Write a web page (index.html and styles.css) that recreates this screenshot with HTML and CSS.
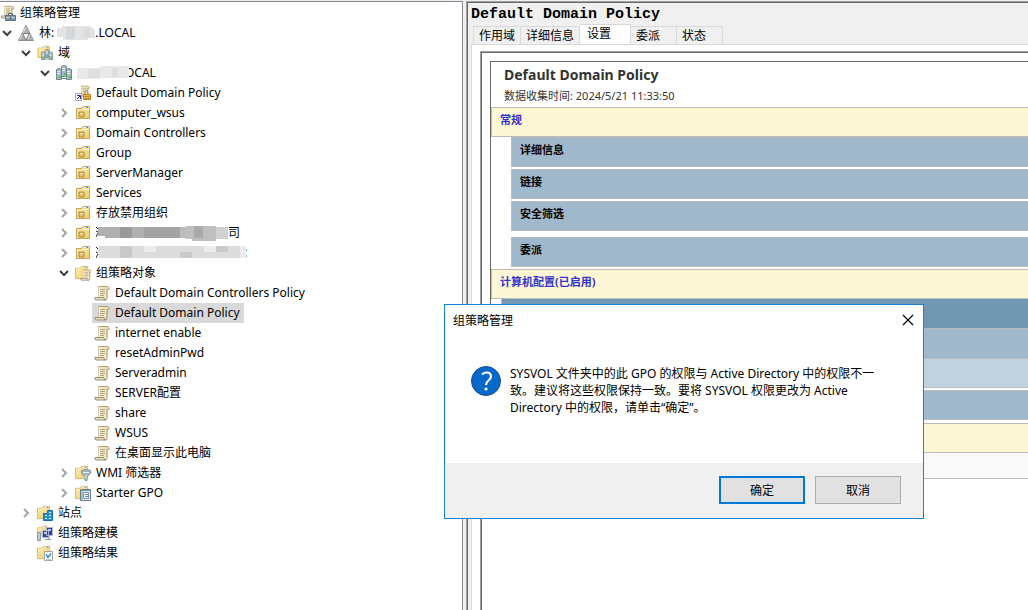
FILE: index.html
```html
<!DOCTYPE html>
<html lang="zh-CN">
  <head>
    <meta charset="UTF-8" />
    <meta name="viewport" content="width=device-width, initial-scale=1.0" />
    <title>组策略管理</title>
    <link rel="stylesheet" href="styles.css">
  </head>
  <body>
    <!-- 图标定义 -->
    <svg class="sprite" aria-hidden="true">
      <linearGradient id="paper" x1="0" x2="1"><stop offset="0" stop-color="#fffbe8" /><stop offset="1" stop-color="#fde6a6" /></linearGradient>
      <linearGradient id="gold" x1="0" y1="0" x2="1" y2="1"><stop offset="0" stop-color="#ffedad" /><stop offset="1" stop-color="#f0cb6c" /></linearGradient>
      <symbol id="i-down" viewBox="0 0 10 10"><path d="M1 3l4 4 4-4" fill="none" stroke="#404040" stroke-width="2" /></symbol>
      <symbol id="i-right" viewBox="0 0 10 10"><path d="M3 1l4 4-4 4" fill="none" stroke="#a6a6a6" stroke-width="2" /></symbol>
      <symbol id="i-scroll" viewBox="0 0 16 16">
        <path d="M4 1h9v11h-2v3H1v-3h3z" fill="url(#paper)" />
        <path d="M4 1.5h10q1 0 1 3h-2" fill="#efe0b0" stroke="#a8a08a" />
        <path d="M4.500 1.500V12" fill="none" stroke="#d2c9ab" />
        <path d="M13 4v9q0 2-2 2" fill="none" stroke="#99917c" />
        <path d="M1 12.500h9q0 2.500 2 2.500H2Q.5 15 1 12.500" fill="#ece2bd" stroke="#938d7c" />
        <path d="M6 4.500h5M6 6.500h5M6 8.500h5M6 10.500h4" stroke="#a3a29a" />
      </symbol>
      <symbol id="i-folder" viewBox="0 0 16 16">
        <path d="M.5 3.500h5l1.500-2h6.500v13H.5z" fill="url(#gold)" stroke="#dab664" />
        <path d="M8 2.500h4" stroke="#fff" /><path d="M10 2.500h2" stroke="#4d9ce8" />
        <path d="M1.500 4.500h5" stroke="#fff5ca" />
      </symbol>
      <symbol id="i-ou" viewBox="0 0 16 16">
        <path d="M1.500 3.500h5l1.500-2h6.500v12h-13z" fill="url(#gold)" stroke="#c9a456" />
        <path d="M9 2.500h5" stroke="#fff" /><path d="M11 2.500h2" stroke="#4d8fdf" />
        <path d="M8 4.500h6" stroke="#fff5ca" />
        <path d="M4 7h5v5H4z" fill="#dcbd66" stroke="#a88c42" /><path d="M5 8.500h3l-2 2" fill="none" stroke="#f7e3a0" />
      </symbol>
      <symbol id="i-forest" viewBox="0 0 16 16">
        <path d="M8 .5L15.500 15.500H.5z" fill="#b7b9bb" stroke="#8d9092" />
        <path d="M8 2L4.500 8.500h7zM4 9l-3 6h6zM12 9l-3 6h6z" fill="#acaeb0" />
        <path d="M4.500 8.500h7L8 15z" fill="#fff" stroke="#7b7e80" />
        <path d="M7.500 3L5 8M4 10l-2 4M12 10l-2 4" stroke="#e7e8e8" />
      </symbol>
      <symbol id="i-server" viewBox="0 0 6 12">
        <path d="M.5 1.500L3 .5l2.500 1v10h-5z" fill="#a6bac6" stroke="#728691" />
        <path d="M1 3.500h3M1 5.500h3" stroke="#eaf1f4" /><path d="M3 8h2v2H3z" fill="#35d22c" />
      </symbol>
      <symbol id="i-servers" viewBox="0 0 16 16">
        <use href="#i-server" x="5" y="0" width="6" height="12" />
        <use href="#i-server" x="0" y="3" width="6" height="12" />
        <use href="#i-server" x="10" y="3" width="6" height="12" />
        <path d="M6 13.500h4" stroke="#718692" />
      </symbol>
      <symbol id="i-domains" viewBox="0 0 16 16">
        <use href="#i-folder" width="15" height="14" />
        <use href="#i-servers" x="4" y="4" width="12" height="12" />
      </symbol>
      <symbol id="i-root" viewBox="0 0 16 16">
        <use href="#i-scroll" width="15" height="14" />
        <path d="M5.500 10.500h10v5h-10z" fill="#829bab" stroke="#5a7181" />
        <path d="M8.500 10.500v-2h4v2" fill="none" stroke="#5c6b74" /><path d="M6 12.500h9" stroke="#bfd0da" /><path d="M10 12h1v2h-1z" fill="#394b56" />
      </symbol>
      <symbol id="i-link" viewBox="0 0 16 16">
        <use href="#i-scroll" x="2" width="14" height="12" />
        <path d="M.5 8.500h6v7h-6z" fill="#fff" stroke="#a0a9b8" /><path d="M2 14l3-3M2 10.500h3.500V14" fill="none" stroke="#302b91" />
        <path d="M10 10V7.500q0-2 1.500-2t1.500 2V10" fill="none" stroke="#9c8b54" /><path d="M8.500 9.500h7v5h-7z" fill="#e9b644" stroke="#bd8728" /><path d="M9 11.500h6M9 13.500h6" stroke="#c58c28" />
      </symbol>
      <symbol id="i-gpos" viewBox="0 0 16 16">
        <use href="#i-folder" width="15" height="15" />
        <use href="#i-scroll" x="5" y="4" width="12" height="12" />
      </symbol>
      <symbol id="i-wmi" viewBox="0 0 16 16">
        <use href="#i-folder" width="15" height="15" />
        <path d="M6.500 8.500v-3q4-2 9 0v3l-3.500 3v4h-2v-4z" fill="#a3b8c4" stroke="#7e95a3" /><path d="M8 7.500h6M11 10v4" stroke="#edf4f7" />
      </symbol>
      <symbol id="i-starter" viewBox="0 0 16 16">
        <use href="#i-folder" width="15" height="15" />
        <path d="M5.500 4.500h10v11h-10z" fill="#e5edf2" stroke="#667d8b" /><path d="M7 4v12M6 5.500h9" stroke="#6f97ae" /><path d="M8.500 7.500h5v6h-5z" fill="#fff" stroke="#7c8fae" /><path d="M10 9.500h3M10 11.500h3" stroke="#6480a6" />
      </symbol>
      <symbol id="i-sites" viewBox="0 0 16 16">
        <use href="#i-folder" width="15" height="15" />
        <path d="M6.500 8.500h4v-3h5v10h-9z" fill="#278fd7" stroke="#1670b2" /><path d="M8 10.500h2M8 13.500h2M12 7.500h2M12 10.500h2M12 13.500h2" stroke="#d5edff" />
      </symbol>
      <symbol id="i-model" viewBox="0 0 16 16">
        <use href="#i-folder" width="12" height="12" />
        <path d="M.5 7.500h3v8h-3z" fill="#bdc8cf" stroke="#8a989f" /><path d="M5.500 5.500h6v7h-6zM9.500 2.500h6v8h-6z" fill="#2b3fb8" stroke="#b4bbc5" />
        <path d="M7 7h2v2H7zM11 4h3v2h-3z" fill="#b9cbff" /><path d="M8 14.500h6M12 11v4" stroke="#8a989f" />
      </symbol>
      <symbol id="i-result" viewBox="0 0 16 16">
        <use href="#i-folder" width="15" height="15" />
        <path d="M7.500 6.500h8v9h-8z" fill="#fff" stroke="#9aa9b3" /><path d="M9 9.500l2 3 3-4" fill="none" stroke="#3787c5" stroke-width="1.500" /><path d="M9 14.500h5" stroke="#bdc8cf" />
      </symbol>
    </svg>

    <div class="window">
      <nav class="tree">
        <div class="root"><svg class="icon"><use href="#i-root" /></svg><span>组策略管理</span></div>
        <ul>
          <li>
            <div class="row"><svg class="toggle"><use href="#i-down" /></svg><a class="node" href="#"><svg class="icon"><use href="#i-forest" /></svg><span>林: <svg class="mosaic" width="38" height="16" viewBox="0 1 38 16"><path d="M0 3h5V1h28l5 4v8h-7v2H6v-3H0z" fill="#e3e3e4" /><path d="M9 2h9v12H9z" fill="#d5d8db" /><path d="M27 3h6v10h-6z" fill="#dcdcdc" /></svg>.LOCAL</span></a></div>
            <ul>
              <li>
                <div class="row"><svg class="toggle"><use href="#i-down" /></svg><a class="node" href="#"><svg class="icon"><use href="#i-domains" /></svg><span>域</span></a></div>
                <ul>
                  <li>
                    <div class="row"><svg class="toggle"><use href="#i-down" /></svg><a class="node" href="#"><svg class="icon"><use href="#i-servers" /></svg><span><svg class="mosaic lap" width="52" height="16" viewBox="2 1 52 16"><path d="M0 3h25V1h29v12H25v1H0z" fill="#e9e9e9" /><path d="M13 4h12v9H13zM37 3h6v9h-6z" fill="#dfdfdf" /></svg>OCAL</span></a></div>
                    <ul>
                      <li><div class="row"><i class="toggle"></i><a class="node" href="#"><svg class="icon"><use href="#i-link" /></svg><span>Default Domain Policy</span></a></div></li>
                      <li><div class="row"><svg class="toggle"><use href="#i-right" /></svg><a class="node" href="#"><svg class="icon"><use href="#i-ou" /></svg><span>computer_wsus</span></a></div></li>
                      <li><div class="row"><svg class="toggle"><use href="#i-right" /></svg><a class="node" href="#"><svg class="icon"><use href="#i-ou" /></svg><span>Domain Controllers</span></a></div></li>
                      <li><div class="row"><svg class="toggle"><use href="#i-right" /></svg><a class="node" href="#"><svg class="icon"><use href="#i-ou" /></svg><span>Group</span></a></div></li>
                      <li><div class="row"><svg class="toggle"><use href="#i-right" /></svg><a class="node" href="#"><svg class="icon"><use href="#i-ou" /></svg><span>ServerManager</span></a></div></li>
                      <li><div class="row"><svg class="toggle"><use href="#i-right" /></svg><a class="node" href="#"><svg class="icon"><use href="#i-ou" /></svg><span>Services</span></a></div></li>
                      <li><div class="row"><svg class="toggle"><use href="#i-right" /></svg><a class="node" href="#"><svg class="icon"><use href="#i-ou" /></svg><span>存放禁用组织</span></a></div></li>
                      <li><div class="row"><svg class="toggle"><use href="#i-right" /></svg><a class="node" href="#"><svg class="icon"><use href="#i-ou" /></svg><span><svg class="mosaic" width="132" height="18" viewBox="0 2 132 18"><path d="M0 4l2 2M0 8l2 1M0 14l2-4" stroke="#222" /><path d="M2 4h130v11H9v-2H2z" fill="#b0b0b0" /><path d="M24 4h12v11H24z" fill="#9c999b" /><path d="M48 4h36v11H48z" fill="#a4a4a4" /><path d="M84 4h12v11H84z" fill="#b9bdbb" /><path d="M90 3h30v15H96v-2h-6z" fill="#bfbfbf" /><path d="M98 3h9v12h-9z" fill="#aaa" /><path d="M120 4h12v12h-12z" fill="#d0d0d0" /></svg>司</span></a></div></li>
                      <li><div class="row"><svg class="toggle"><use href="#i-right" /></svg><a class="node" href="#"><svg class="icon"><use href="#i-ou" /></svg><span><svg class="mosaic" width="151" height="18" viewBox="0 2 151 18"><path d="M0 4l2 2M0 9l2 1M0 15l2-4" stroke="#222" /><path d="M3 3h147v12H3z" fill="#dcdcdc" /><path d="M24 3h12v12H24zM84 9h12v6H84zM120 3h12v6h-12z" fill="#c9c9c9" /><path d="M48 3h12v6H48zM108 3h12v6h-12zM144 3h6v12h-6z" fill="#ececec" /><path d="M150 6h1v2h-1zM150 12h1v2h-1z" fill="#6dc0ee" /></svg></span></a></div></li>
                      <li>
                        <div class="row"><svg class="toggle"><use href="#i-down" /></svg><a class="node" href="#"><svg class="icon"><use href="#i-gpos" /></svg><span>组策略对象</span></a></div>
                        <ul>
                          <li><div class="row"><i class="toggle"></i><a class="node" href="#"><svg class="icon"><use href="#i-scroll" /></svg><span>Default Domain Controllers Policy</span></a></div></li>
                          <li><div class="row"><i class="toggle"></i><a class="node selected" href="#"><svg class="icon"><use href="#i-scroll" /></svg><span>Default Domain Policy</span></a></div></li>
                          <li><div class="row"><i class="toggle"></i><a class="node" href="#"><svg class="icon"><use href="#i-scroll" /></svg><span>internet enable</span></a></div></li>
                          <li><div class="row"><i class="toggle"></i><a class="node" href="#"><svg class="icon"><use href="#i-scroll" /></svg><span>resetAdminPwd</span></a></div></li>
                          <li><div class="row"><i class="toggle"></i><a class="node" href="#"><svg class="icon"><use href="#i-scroll" /></svg><span>Serveradmin</span></a></div></li>
                          <li><div class="row"><i class="toggle"></i><a class="node" href="#"><svg class="icon"><use href="#i-scroll" /></svg><span>SERVER配置</span></a></div></li>
                          <li><div class="row"><i class="toggle"></i><a class="node" href="#"><svg class="icon"><use href="#i-scroll" /></svg><span>share</span></a></div></li>
                          <li><div class="row"><i class="toggle"></i><a class="node" href="#"><svg class="icon"><use href="#i-scroll" /></svg><span>WSUS</span></a></div></li>
                          <li><div class="row"><i class="toggle"></i><a class="node" href="#"><svg class="icon"><use href="#i-scroll" /></svg><span>在桌面显示此电脑</span></a></div></li>
                        </ul>
                      </li>
                      <li><div class="row"><svg class="toggle"><use href="#i-right" /></svg><a class="node" href="#"><svg class="icon"><use href="#i-wmi" /></svg><span>WMI 筛选器</span></a></div></li>
                      <li><div class="row"><svg class="toggle"><use href="#i-right" /></svg><a class="node" href="#"><svg class="icon"><use href="#i-starter" /></svg><span>Starter GPO</span></a></div></li>
                    </ul>
                  </li>
                </ul>
              </li>
              <li><div class="row"><svg class="toggle"><use href="#i-right" /></svg><a class="node" href="#"><svg class="icon"><use href="#i-sites" /></svg><span>站点</span></a></div></li>
              <li><div class="row"><i class="toggle"></i><a class="node" href="#"><svg class="icon"><use href="#i-model" /></svg><span>组策略建模</span></a></div></li>
              <li><div class="row"><i class="toggle"></i><a class="node" href="#"><svg class="icon"><use href="#i-result" /></svg><span>组策略结果</span></a></div></li>
            </ul>
          </li>
        </ul>
      </nav>

      <main class="detail">
        <h1>Default Domain Policy</h1>
        <div class="tabs">
          <button class="tab">作用域</button>
          <button class="tab">详细信息</button>
          <button class="tab active">设置</button>
          <button class="tab short">委派</button>
          <button class="tab short">状态</button>
        </div>
        <div class="tab-page">
          <div class="frame">
            <div class="report">
              <h2>Default Domain Policy</h2>
              <p class="time">数据收集时间: 2024/5/21 11:33:50</p>
              <h3 class="section">常规</h3>
              <div class="group">
                <div class="bar">详细信息</div>
                <div class="bar">链接</div>
                <div class="bar">安全筛选</div>
                <div class="bar last">委派</div>
              </div>
              <h3 class="section">计算机配置(已启用)</h3>
              <div class="config">
                <div class="bar dark"></div>
                <div class="bar joined"></div>
                <div class="bar pale"></div>
                <div class="bar"></div>
              </div>
              <h3 class="section"></h3>
              <div class="empty"></div>
            </div>
          </div>
        </div>
      </main>
    </div>

    <!-- 权限不一致提示框 -->
    <div class="dialog" role="dialog" aria-labelledby="dialogTitle">
      <div class="dialog-title">
        <span id="dialogTitle">组策略管理</span>
        <button class="close" aria-label="关闭"><svg width="12" height="12" viewBox="0 0 12 12"><path d="M1 1l10 10M11 1L1 11" stroke="#000" stroke-width="1.200" /></svg></button>
      </div>
      <div class="dialog-body">
        <svg width="30" height="30" viewBox="0 0 30 30">
          <circle cx="15" cy="15" r="14.500" fill="#0668c9" stroke="#164f88" />
          <path d="M11 8.500Q13 6.500 15.500 6.500 20 6.500 20 10.500 20 12.500 17.500 14.500 15 16.500 15 19" fill="none" stroke="#fff" stroke-width="2.200" />
          <circle cx="15" cy="23" r="1.600" fill="#fff" />
        </svg>
        <p>SYSVOL 文件夹中的此 GPO 的权限与 Active Directory 中的权限不一<br>致。建议将这些权限保持一致。要将 SYSVOL 权限更改为 Active<br>Directory 中的权限，请单击“确定”。</p>
      </div>
      <div class="dialog-footer">
        <button class="btn primary">确定</button>
        <button class="btn">取消</button>
      </div>
    </div>
  </body>
</html>
```
FILE: styles.css
```css
* {
  box-sizing: border-box;
}
body {
  margin: 0;
  height: 100vh;
  overflow: hidden;
  position: relative;
  font-family: "Noto Sans", "Noto Sans CJK SC", sans-serif;
  font-size: 12px;
  color: #000;
  background-color: #f0f0f0;
}
button {
  font: inherit;
  color: inherit;
  padding: 0;
}
h1,
h2,
h3,
p,
ul {
  margin: 0;
  padding: 0;
}
.sprite {
  position: absolute;
  width: 0;
  height: 0;
}
.window {
  display: grid;
  grid-template-columns: 463px 1fr;
  column-gap: 3px;
  height: 100%;
  padding-top: 1px;
}

/* 左侧树 */
.tree {
  background-color: #fff;
  border-top: 1px solid #828790;
  border-right: 1px solid #828790;
  padding-top: 1px;
  overflow: hidden;
}
.tree ul {
  list-style: none;
}
.tree ul ul {
  padding-left: 19px;
}
.root,
.row,
.node {
  display: flex;
  align-items: center;
  height: 20px;
  line-height: 20px;
  white-space: nowrap;
}
.root {
  gap: 4px;
}
.node {
  gap: 5px;
  padding: 0 4px 0 2px;
  color: #000;
  text-decoration: none;
}
.node.selected {
  background-color: #d9d9d9;
}
.icon {
  width: 16px;
  height: 16px;
  flex: none;
}
.toggle {
  width: 10px;
  height: 10px;
  margin: 0 4px 0 2px;
  flex: none;
}
.mosaic {
  vertical-align: middle;
}
.mosaic.lap {
  position: relative;
  margin-right: -4px;
}

/* 右侧详情 */
.detail {
  display: flex;
  flex-direction: column;
  min-width: 0;
  border: solid #a0a0a0;
  border-width: 1px 0 0 1px;
  box-shadow: inset 1px 1px 0 #696969;
  padding: 1px 0 0 1px;
  overflow: hidden;
}
h1 {
  font: bold 15px/18px "Liberation Mono", monospace;
  padding: 3px 0 0 3px;
}
.tabs {
  display: flex;
  align-items: flex-end;
  height: 20px;
  padding-left: 5px;
}
.tab {
  height: 18px;
  padding: 0 5px;
  line-height: 18px;
  background-color: #f0f0f0;
  border: 1px solid #d9d9d9;
  border-left-width: 0;
  border-bottom: none;
  text-align: left;
}
.tab:first-child {
  border-left-width: 1px;
}
.tab.active {
  height: 20px;
  width: 51px;
  padding: 0 7px 2px;
  background-color: #fff;
}
.tab.short {
  width: 46px;
}
.tab-page {
  flex: 1;
  margin-left: 3px;
  padding: 6px 0 0 8px;
  background-color: #fff;
  border-top: 1px solid #d9d9d9;
  border-left: 1px solid #d9d9d9;
}
.frame {
  height: 100%;
  padding: 9px 0 0 9px;
  border: solid #a0a0a0;
  border-width: 1px 0 0 1px;
  box-shadow: inset 1px 1px 0 #696969;
}
.report {
  border-top: 1px solid #696969;
  border-left: 1px solid #696969;
  color: #333;
  font-size: 11px;
}
h2 {
  padding: 1px 0 0 13px;
  font-size: 14px;
  line-height: 24px;
}
.time {
  padding: 0 0 3px 13px;
  line-height: 17px;
}
.section {
  height: 30px;
  padding: 0 8px;
  font-size: 11px;
  line-height: 24px;
  color: #33c;
  background-color: #fef7d6;
  border: 1px solid #bbb;
  border-right: none;
}
.group {
  padding: 0 0 2px 20px;
}
.bar {
  height: 30px;
  margin-bottom: 2px;
  padding-left: 8px;
  font-weight: bold;
  line-height: 24px;
  color: #000;
  background-color: #a0b8cc;
  border: 1px solid #bbb;
  border-right: none;
}
.bar.last {
  margin-top: 6px;
  margin-bottom: 0;
}
.config {
  padding: 0 0 3px 10px;
}
.config .bar {
  margin-bottom: 0;
}
.config .bar.dark {
  height: 29px;
  background-color: #7197b3;
  border-top: none;
  border-bottom: none;
}
.config .bar.joined {
  border-bottom: none;
}
.config .bar.pale {
  margin-bottom: 2px;
  background-color: #c0d2de;
}
.empty {
  height: 26px;
  background-color: #f9f9f9;
  border-bottom: 1px solid #bbb;
}

/* 提示框 */
.dialog {
  position: absolute;
  left: 444px;
  top: 304px;
  width: 480px;
  background-color: #fff;
  border: 1px solid #1883d7;
}
.dialog-title {
  display: flex;
  align-items: center;
  justify-content: space-between;
  height: 29px;
  padding: 0 9px 0 8px;
}
.close {
  display: flex;
  background: none;
  border: none;
}
.dialog-body {
  display: flex;
  gap: 9px;
  height: 129px;
  padding: 31px 26px 0;
}
.dialog-body svg {
  margin-top: 1px;
  flex: none;
}
.dialog-body p {
  line-height: 17px;
  white-space: nowrap;
}
.dialog-footer {
  display: flex;
  justify-content: flex-end;
  gap: 10px;
  height: 55px;
  padding: 13px 22px 0;
  background-color: #f0f0f0;
}
.btn {
  width: 86px;
  height: 28px;
  background-color: #e1e1e1;
  border: 1px solid #adadad;
}
.btn.primary {
  border: 2px solid #0078d7;
}
```
